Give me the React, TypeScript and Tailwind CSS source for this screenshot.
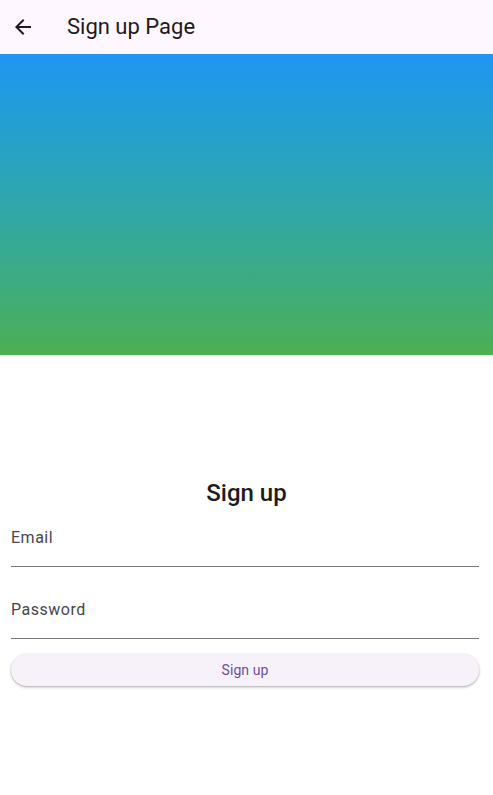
import React from "react";

export default function App() {
  return (
    <div className="w-[493px] h-[795px] bg-white flex flex-col" style={{ fontFamily: "Roboto, 'Noto Sans', sans-serif" }}>
      <div className="h-[54px] bg-[#fef7ff] flex items-center shrink-0">
        <div className="w-[46px] flex justify-center">
          <svg width="24" height="24" viewBox="0 0 24 24">
            <path d="M20 11H7.83l5.59-5.59L12 4l-8 8 8 8 1.41-1.41L7.83 13H20v-2z" fill="#1d1b20" />
          </svg>
        </div>
        <div className="ml-[21px] text-[22px] text-[#1d1b20] leading-[28px]">Sign up Page</div>
      </div>
      <div className="h-[301px] shrink-0 bg-gradient-to-b from-[#2196f3] to-[#4caf50]" />
      <div className="h-[122px] shrink-0" />
      <div className="px-[11px] pr-[14px] flex flex-col">
        <div className="text-center text-[24px] leading-[32px] font-medium text-[#1d1b20] pl-[3px]">Sign up</div>
        <div className="h-[58px] border-b border-[#79747e] flex items-start pt-[19px]">
          <span className="text-[16px] leading-[20px] tracking-[0.5px] text-[#49454f]">Email</span>
        </div>
        <div className="h-[72px] border-b border-[#79747e] flex items-start pt-[33px]">
          <span className="text-[16px] leading-[20px] tracking-[0.5px] text-[#49454f]">Password</span>
        </div>
        <div className="mt-[15px] h-[32px] rounded-full bg-[#f7f2fa] shadow-[0_1px_2px_rgba(0,0,0,0.25),0_1px_3px_1px_rgba(0,0,0,0.08)] flex items-center justify-center text-[14px] text-[#6750a4] tracking-[0.1px]">
          Sign up
        </div>
      </div>
    </div>
  );
}
